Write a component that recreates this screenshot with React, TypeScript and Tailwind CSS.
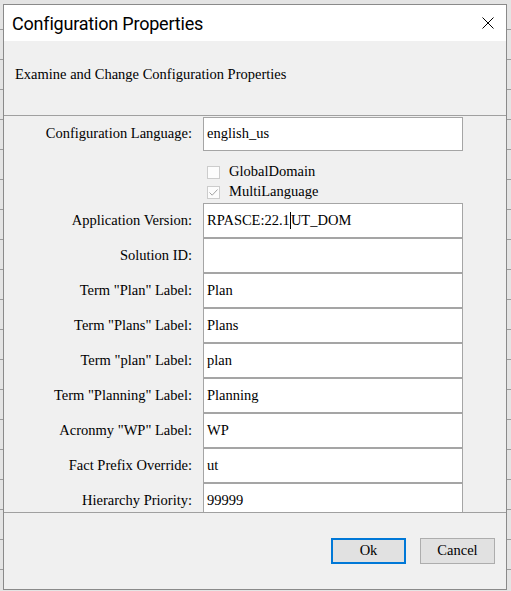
const fields = [
  { label: "Application Version:", value: "RPASCE:22.1", after: "UT_DOM" },
  { label: "Solution ID:", value: "" },
  { label: 'Term "Plan" Label:', value: "Plan" },
  { label: 'Term "Plans" Label:', value: "Plans" },
  { label: 'Term "plan" Label:', value: "plan" },
  { label: 'Term "Planning" Label:', value: "Planning" },
  { label: 'Acronmy "WP" Label:', value: "WP" },
  { label: "Fact Prefix Override:", value: "ut" },
  { label: "Hierarchy Priority:", value: "99999" },
];

function Field({ label, value, after, h = "h-[35px]" }: { label: string; value: string; after?: string; h?: string }) {
  return (
    <div className={`flex items-center gap-[11px] ${h}`}>
      <div className="w-[188px] text-right">{label}</div>
      <div className={`w-[260px] ${h} border border-[#a5a5a5] bg-white pl-[3px] flex items-center`}>
        <span>{value}</span>
        {after !== undefined && (
          <>
            <span className="inline-block w-px h-[17px] bg-black" />
            <span>{after}</span>
          </>
        )}
      </div>
    </div>
  );
}

function Check({ label, checked }: { label: string; checked?: boolean }) {
  return (
    <div className="flex items-center h-[20px] pl-[203px]">
      <div className="w-[13px] h-[13px] border border-[#cccccc] bg-[#fcfcfc] flex items-center justify-center">
        {checked && (
          <svg width="11" height="11" viewBox="0 0 11 11">
            <path d="M1.5 5.5 L4.2 8.2 L9.5 2.5" fill="none" stroke="#a3a3a3" strokeWidth="1" />
          </svg>
        )}
      </div>
      <span className="ml-[9px]">{label}</span>
    </div>
  );
}

export default function App() {
  return (
    <div className="w-[511px] h-[591px] overflow-hidden pt-[4px] pl-[3px] bg-[#e4e4e4] bg-[repeating-linear-gradient(to_bottom,transparent_0,transparent_29px,#9c9c9c_29px,#9c9c9c_30px)]">
      <div
        className="w-[504px] h-[586px] border border-[#8a8a8a] bg-[#f0f0f0] flex flex-col text-[14.5px] text-black"
        style={{ fontFamily: '"Liberation Serif", "Times New Roman", serif' }}
      >
        {/* Title bar */}
        <div className="h-[36px] shrink-0 bg-white flex items-center justify-between pl-[8px] pr-[12px]">
          <span className="text-[18px] text-[#000] tracking-[-0.2px]" style={{ fontFamily: 'Roboto, "Noto Sans", sans-serif' }}>
            Configuration Properties
          </span>
          <svg width="12" height="12" viewBox="0 0 12 12">
            <path d="M0.5 0.5 L11.5 11.5 M11.5 0.5 L0.5 11.5" stroke="#000" strokeWidth="1" />
          </svg>
        </div>

        {/* Header text */}
        <div className="h-[74px] shrink-0 pl-[11px] pt-[23px]">Examine and Change Configuration Properties</div>

        {/* Properties panel */}
        <div className="h-[398px] shrink-0 border-y border-[#a0a0a0] overflow-hidden pt-[1px]">
          <Field label="Configuration Language:" value="english_us" h="h-[34px]" />
          <div className="mt-[11px] mb-[1px]">
            <Check label="GlobalDomain" />
            <Check label="MultiLanguage" checked />
          </div>
          {fields.map((f) => (
            <Field key={f.label} label={f.label} value={f.value} after={f.after} />
          ))}
        </div>

        {/* Buttons */}
        <div className="flex-1 flex justify-end items-start gap-[14px] pt-[25px] pr-[11px]">
          <button className="w-[75px] h-[26px] border-2 border-[#0078d7] bg-[#e1e1e1]">Ok</button>
          <button className="w-[75px] h-[26px] border border-[#adadad] bg-[#e1e1e1]">Cancel</button>
        </div>
      </div>
    </div>
  );
}
